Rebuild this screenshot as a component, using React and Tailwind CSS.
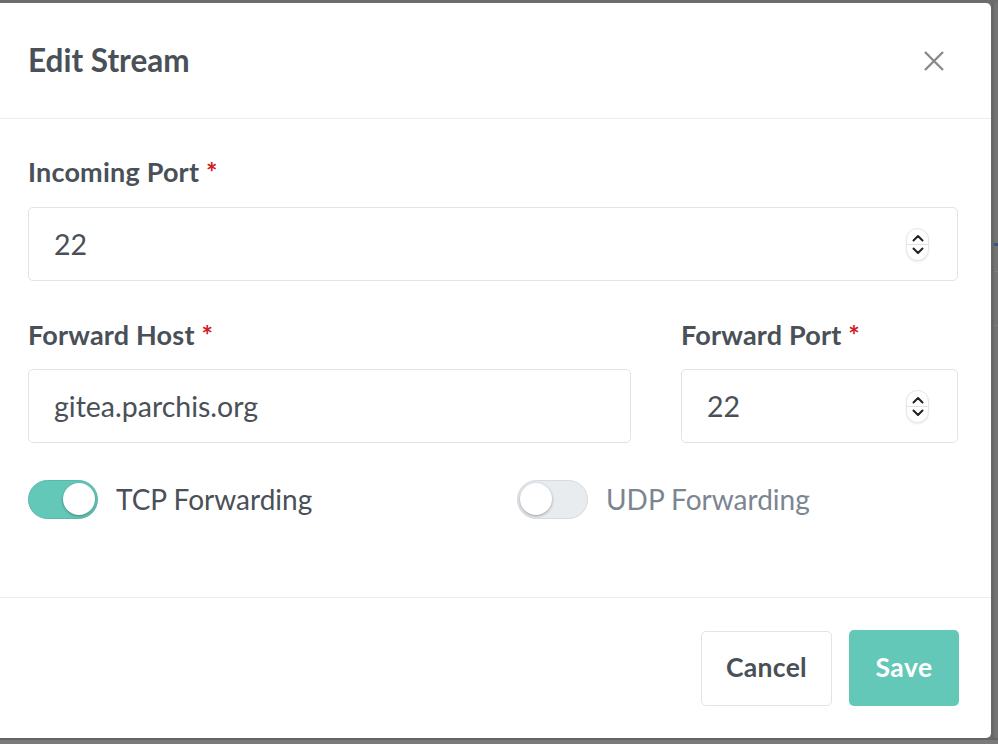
import React from "react";

const font = { fontFamily: "Lato, 'Noto Sans', sans-serif" };

function Spinner() {
  return (
    <div className="flex h-[33px] w-[23px] flex-col items-center justify-between rounded-full border border-[#e6e6e6] bg-white py-[5px] shadow-[0_1px_2px_rgba(0,0,0,0.08)]">
      <svg width="12" height="8" viewBox="0 0 12 8" fill="none">
        <path d="M1.5 6.5 6 2l4.5 4.5" stroke="#222" strokeWidth="2" strokeLinecap="round" strokeLinejoin="round" />
      </svg>
      <div className="h-px w-full bg-[#e2e2e2]" />
      <svg width="12" height="8" viewBox="0 0 12 8" fill="none">
        <path d="M1.5 1.5 6 6l4.5-4.5" stroke="#222" strokeWidth="2" strokeLinecap="round" strokeLinejoin="round" />
      </svg>
    </div>
  );
}

function Label({ children, className = "" }) {
  return (
    <div className={`text-[27px] font-bold leading-[32px] tracking-[0.2px] text-[#495057] ${className}`}>
      {children} <span className="text-[#cd201f]">*</span>
    </div>
  );
}

function Field({ value, number }) {
  return (
    <div className="flex h-[74px] items-center justify-between rounded-[5px] border border-[#dfe3ea] pl-[25px] pr-[28px] text-[28.5px] text-[#495057]">
      <span>{value}</span>
      {number && <Spinner />}
    </div>
  );
}

function Toggle({ on, label }) {
  return (
    <div className="flex items-center gap-[18px]">
      {on ? (
        <div className="flex h-[39px] w-[70px] items-center justify-end rounded-full border border-[#58b9aa] bg-[#64c8b9] pr-[2px]">
          <div className="h-[32px] w-[32px] rounded-full bg-white shadow-[0_1px_3px_rgba(0,0,0,0.35)]" />
        </div>
      ) : (
        <div className="flex h-[39px] w-[71px] items-center rounded-full border border-[#d6dae1] bg-[#e9ecef] pl-[2px]">
          <div className="h-[32px] w-[32px] rounded-full bg-white shadow-[0_1px_3px_rgba(0,0,0,0.35)]" />
        </div>
      )}
      <span className={`text-[28px] ${on ? "text-[#495057]" : "text-[#7c8592]"}`}>{label}</span>
    </div>
  );
}

export default function App() {
  return (
    <div className="flex h-[744px] w-[998px] flex-col overflow-hidden bg-[#737373]" style={font}>
      <div className="h-[3px] bg-[#6c6c6c]" />
      <div className="flex h-[735px]">
        {/* Modal */}
        <div className="flex w-[991px] flex-col rounded-r-[5px] bg-white">
          {/* Header */}
          <div className="flex h-[116px] items-center justify-between border-b border-[#e9ecf0] pl-[28px] pr-[47px]">
            <h2 className="text-[31.5px] font-bold text-[#495057]">Edit Stream</h2>
            <svg width="20" height="20" viewBox="0 0 20 20" fill="none">
              <path d="M1 1l18 18M19 1 1 19" stroke="#888" strokeWidth="2.3" />
            </svg>
          </div>

          {/* Body */}
          <div className="flex-1 pl-[28px] pr-[33px] pt-[37px]">
            <Label className="mb-[19px]">Incoming Port</Label>
            <Field value="22" number />

            <div className="mt-[38px] grid grid-cols-[603px_277px] gap-x-[50px]">
              <div>
                <Label className="mb-[18px]">Forward Host</Label>
                <Field value="gitea.parchis.org" />
              </div>
              <div>
                <Label className="mb-[18px]">Forward Port</Label>
                <Field value="22" number />
              </div>
            </div>

            <div className="mt-[35px] grid grid-cols-[489px_1fr]">
              <Toggle on label="TCP Forwarding" />
              <Toggle label="UDP Forwarding" />
            </div>
          </div>

          {/* Footer */}
          <div className="flex h-[141px] items-center justify-end gap-[17px] border-t border-[#e9ecf0] pr-[32px]">
            <button className="flex h-[75px] w-[131px] items-center justify-center rounded-[5px] border border-[#dfe3ea] bg-white text-[26.5px] font-bold tracking-[0.3px] text-[#495057]">
              Cancel
            </button>
            <button className="flex h-[76px] w-[110px] items-center justify-center rounded-[5px] bg-[#64c8b9] text-[26.5px] font-bold tracking-[0.5px] text-white">
              Save
            </button>
          </div>
        </div>

        {/* Page behind the overlay */}
        <div className="flex w-[7px] flex-col border-l-[3px] border-[#676767]">
          <div className="mt-[240px] h-[3px] bg-[#3c5481]" />
          <div className="mt-[25px] h-px bg-[#7e7e7e]" />
          <div className="mt-[53px] h-px bg-[#7e7e7e]" />
        </div>
      </div>
      <div className="h-[2px] bg-[#656565]" />
      <div className="flex-1 bg-[#7a7a7a]" />
    </div>
  );
}
